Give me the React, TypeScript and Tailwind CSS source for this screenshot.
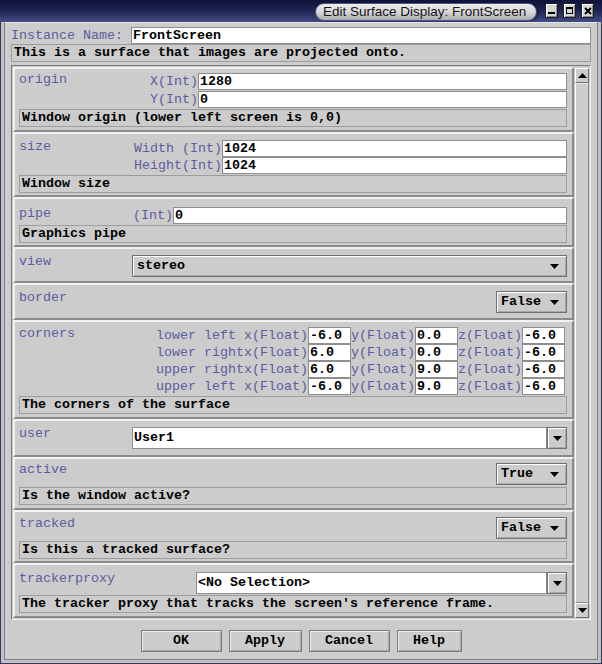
import React from "react";

const M = "font-['Liberation_Mono',monospace] text-[13.33px]";

function Arrow({ up = false }: { up?: boolean }) {
  return (
    <svg width="9" height="5" viewBox="0 0 9 5" className="block">
      <path d={up ? "M0 5H9L4.5 0Z" : "M0 0H9L4.5 5Z"} fill="#000" />
    </svg>
  );
}

function Field({ value, w }: { value: string; w: string }) {
  return (
    <div
      className={`${w} h-[17px] bg-white border border-[#8e8e8e] pl-[1px] ${M} font-bold leading-[15px] text-black whitespace-nowrap overflow-hidden`}
    >
      {value}
    </div>
  );
}

function Desc({ text, cls = "" }: { text: string; cls?: string }) {
  return (
    <div
      className={`h-[18px] border border-[#9c9c9c] pl-[2px] ${M} font-bold leading-[16px] text-black whitespace-nowrap overflow-hidden ${cls}`}
    >
      {text}
    </div>
  );
}

function Label({ children, cls = "" }: { children: React.ReactNode; cls?: string }) {
  return (
    <div className={`${M} leading-[13px] text-[#5c5ca0] whitespace-nowrap ${cls}`}>{children}</div>
  );
}

function FLabel({ children }: { children: React.ReactNode }) {
  return <span className={`${M} leading-[17px] text-[#5c5ca0] whitespace-pre`}>{children}</span>;
}

function Section({ cls, children }: { cls: string; children: React.ReactNode }) {
  return (
    <div
      className={`border-2 border-t-[#f2f2f2] border-l-[#f2f2f2] border-b-[#8a8a8a] border-r-[#8a8a8a] pl-[4px] pr-[5px] ${cls}`}
    >
      {children}
    </div>
  );
}

function Select({ value, w }: { value: string; w: string }) {
  return (
    <div
      className={`${w} h-[22px] border border-[#707070] shadow-[inset_1px_1px_0_#ffffff,inset_-1px_-1px_0_#a8a8a8] flex items-center justify-between pl-[4px] pr-[7px]`}
    >
      <span className={`${M} font-bold leading-[16px] text-black`}>{value}</span>
      <Arrow />
    </div>
  );
}

function Combo({ value, w }: { value: string; w: string }) {
  return (
    <div className="flex h-[22px]">
      <div
        className={`${w} h-[22px] bg-white border border-[#8e8e8e] pl-[1px] ${M} font-bold leading-[20px] text-black whitespace-nowrap`}
      >
        {value}
      </div>
      <div className="w-[20px] h-[22px] border border-[#707070] shadow-[inset_1px_1px_0_#ffffff,inset_-1px_-1px_0_#a8a8a8] flex items-center justify-center">
        <Arrow />
      </div>
    </div>
  );
}

function Btn({ label, w }: { label: string; w: string }) {
  return (
    <div
      className={`${w} h-[22px] border border-[#7c7c7c] shadow-[inset_1px_1px_0_#ececec,inset_-1px_-1px_0_#a8a8a8] flex items-center justify-center ${M} font-bold text-black`}
    >
      {label}
    </div>
  );
}

function TitleBtn({ kind }: { kind: "min" | "max" | "close" }) {
  return (
    <div className="w-[13px] h-[15px] bg-[#d6d6d6] border border-[#1e1e1e] shadow-[inset_1px_1px_0_#ffffff,inset_-1px_-1px_0_#8a8a8a] flex items-center justify-center">
      {kind === "min" && (
        <svg width="7" height="9" viewBox="0 0 7 9">
          <rect x="0" y="6" width="7" height="2" fill="#000" />
        </svg>
      )}
      {kind === "max" && (
        <svg width="7" height="7" viewBox="0 0 7 7">
          <rect x="0.5" y="0.5" width="6" height="6" fill="none" stroke="#000" />
          <rect x="0" y="0" width="7" height="2" fill="#000" />
        </svg>
      )}
      {kind === "close" && (
        <svg width="8" height="8" viewBox="0 0 8 8">
          <path d="M1 1L7 7M7 1L1 7" stroke="#000" strokeWidth="2" />
        </svg>
      )}
    </div>
  );
}

const corners = [
  ["lower left ", "-6.0", "0.0", "-6.0"],
  ["lower right", "6.0", "0.0", "-6.0"],
  ["upper right", "6.0", "9.0", "-6.0"],
  ["upper left ", "-6.0", "9.0", "-6.0"],
];

export default function App() {
  return (
    <div className="w-[602px] h-[664px] bg-[#cccccc] flex flex-col overflow-hidden">
      {/* Title bar */}
      <div className="h-[22px] shrink-0 bg-linear-to-b from-[#10143a] via-[#1f2554] to-[#444c84] flex items-start">
        <div className="ml-[315px] mt-[3px] w-[222px] h-[18px] rounded-full bg-linear-to-b from-[#eeeeee] via-[#d6d6d8] to-[#a9aab4] border border-[#4d5484] shadow-[1px_0_2px_#0b0e2a] flex items-center pl-[7px] font-['Liberation_Sans',sans-serif] text-[13.5px] text-[#151515] whitespace-nowrap overflow-hidden">
          Edit Surface Display: FrontScreen
        </div>
        <div className="ml-[8px] mt-[3px] flex gap-[5px]">
          <TitleBtn kind="min" />
          <TitleBtn kind="max" />
          <TitleBtn kind="close" />
        </div>
      </div>

      {/* Body frame */}
      <div className="h-[642px] border-x border-b border-[#30365f] bg-[#c2c2c2] px-[3px] pb-[3px]">
        <div className="h-[638px] border-x border-b border-[#7c7c7c] border-t border-t-[#e6e6e6] bg-[#cccccc] px-[6px] pt-[4px] flex flex-col">
          {/* Instance name */}
          <div className="h-[17px] flex items-center">
            <span className={`${M} leading-[17px] text-[#5c5ca0]`}>Instance Name:</span>
            <div className="ml-auto">
              <Field value="FrontScreen" w="w-[460px]" />
            </div>
          </div>
          <Desc text="This is a surface that images are projected onto." />

          {/* Scroll area */}
          <div className="mt-[3px] h-[555px] border border-t-[#7a7a7a] border-l-[#7a7a7a] border-b-[#f2f2f2] border-r-[#f2f2f2] flex pl-[1px]">
            <div className="w-[561px] pt-[1px] flex flex-col">
              {/* origin */}
              <Section cls="h-[65px] pt-[4px]">
                <div className="flex">
                  <Label>origin</Label>
                  <div className="ml-auto flex flex-col gap-[1px]">
                    <div className="flex items-center">
                      <FLabel>X(Int)</FLabel>
                      <Field value="1280" w="w-[369px]" />
                    </div>
                    <div className="flex items-center">
                      <FLabel>Y(Int)</FLabel>
                      <Field value="0" w="w-[369px]" />
                    </div>
                  </div>
                </div>
                <Desc text="Window origin (lower left screen is 0,0)" cls="mt-[1px]" />
              </Section>

              {/* size */}
              <Section cls="h-[65px] pt-[6px]">
                <div className="flex">
                  <Label>size</Label>
                  <div className="ml-auto flex flex-col">
                    <div className="flex items-center">
                      <FLabel>Width (Int)</FLabel>
                      <Field value="1024" w="w-[345px]" />
                    </div>
                    <div className="flex items-center">
                      <FLabel>Height(Int)</FLabel>
                      <Field value="1024" w="w-[345px]" />
                    </div>
                  </div>
                </div>
                <Desc text="Window size" cls="mt-[1px]" />
              </Section>

              {/* pipe */}
              <Section cls="h-[50px] pt-[8px]">
                <div className="flex">
                  <Label>pipe</Label>
                  <div className="ml-auto flex items-center">
                    <FLabel>(Int)</FLabel>
                    <Field value="0" w="w-[394px]" />
                  </div>
                </div>
                <Desc text="Graphics pipe" cls="mt-[1px]" />
              </Section>

              {/* view */}
              <Section cls="h-[36px] pt-[6px]">
                <div className="flex">
                  <Label>view</Label>
                  <div className="ml-auto">
                    <Select value="stereo" w="w-[435px]" />
                  </div>
                </div>
              </Section>

              {/* border */}
              <Section cls="h-[37px] pt-[6px]">
                <div className="flex">
                  <Label>border</Label>
                  <div className="ml-auto">
                    <Select value="False" w="w-[71px]" />
                  </div>
                </div>
              </Section>

              {/* corners */}
              <Section cls="h-[99px] pt-[5px]">
                <div className="flex">
                  <Label cls="w-[137px]">corners</Label>
                  <div className="flex flex-col">
                    {corners.map((r, i) => (
                      <div key={i} className="h-[17px] flex items-center">
                        <FLabel>{r[0] + "x(Float)"}</FLabel>
                        <Field value={r[1]} w="w-[43px]" />
                        <FLabel>y(Float)</FLabel>
                        <Field value={r[2]} w="w-[43px]" />
                        <FLabel>z(Float)</FLabel>
                        <Field value={r[3]} w="w-[43px]" />
                      </div>
                    ))}
                  </div>
                </div>
                <Desc text="The corners of the surface" cls="mt-[1px]" />
              </Section>

              {/* user */}
              <Section cls="h-[38px] pt-[6px]">
                <div className="flex">
                  <Label>user</Label>
                  <div className="ml-auto">
                    <Combo value="User1" w="w-[415px]" />
                  </div>
                </div>
              </Section>

              {/* active */}
              <Section cls="h-[53px] pt-[4px]">
                <div className="flex">
                  <Label>active</Label>
                  <div className="ml-auto">
                    <Select value="True" w="w-[71px]" />
                  </div>
                </div>
                <Desc text="Is the window active?" cls="mt-[2px]" />
              </Section>

              {/* tracked */}
              <Section cls="h-[53px] pt-[5px]">
                <div className="flex">
                  <Label>tracked</Label>
                  <div className="ml-auto">
                    <Select value="False" w="w-[71px]" />
                  </div>
                </div>
                <Desc text="Is this a tracked surface?" cls="mt-[2px]" />
              </Section>

              {/* trackerproxy */}
              <Section cls="h-[55px] pt-[7px]">
                <div className="flex">
                  <Label>trackerproxy</Label>
                  <div className="ml-auto">
                    <Combo value="<No Selection>" w="w-[351px]" />
                  </div>
                </div>
                <Desc text="The tracker proxy that tracks the screen's reference frame." cls="mt-[1px]" />
              </Section>
            </div>

            {/* Scrollbar */}
            <div className="ml-[1px] w-[14px] pt-[2px] pb-[1px] flex flex-col">
              <div className="h-[15px] border border-t-[#ffffff] border-l-[#ffffff] border-b-[#6e6e6e] border-r-[#6e6e6e] flex items-center justify-center">
                <Arrow up />
              </div>
              <div className="flex-1 border border-t-[#e8e8e8] border-l-[#ffffff] border-b-[#8a8a8a] border-r-[#8a8a8a] bg-[#cccccc]" />
              <div className="h-[15px] border border-t-[#ffffff] border-l-[#ffffff] border-b-[#6e6e6e] border-r-[#6e6e6e] flex items-center justify-center">
                <Arrow />
              </div>
            </div>
          </div>

          {/* Buttons */}
          <div className="mt-[10px] flex justify-center gap-[7px]">
            <Btn label="OK" w="w-[81px]" />
            <Btn label="Apply" w="w-[73px]" />
            <Btn label="Cancel" w="w-[81px]" />
            <Btn label="Help" w="w-[65px]" />
          </div>
        </div>
      </div>
    </div>
  );
}
